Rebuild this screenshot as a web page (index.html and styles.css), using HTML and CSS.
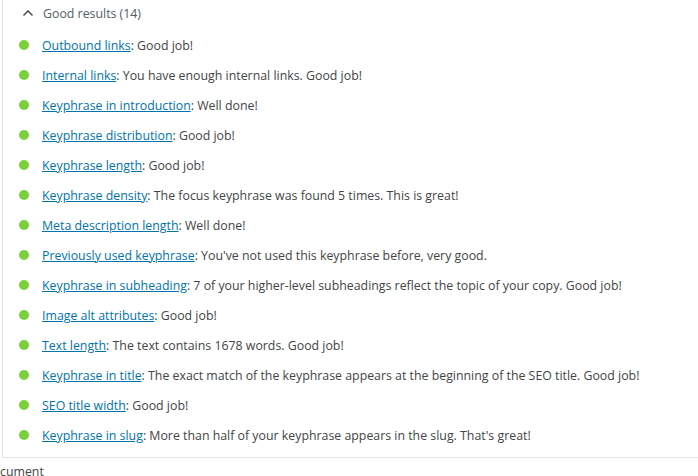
FILE: index.html
```html
<!DOCTYPE html>
<html>
<head>
<meta charset="utf-8">
<link rel="stylesheet" href="styles.css">
</head>
<body>
<div class="panel">
  <div class="header">
    <svg class="chev" width="12" height="8" viewBox="0 0 12 8"><path d="M1.5 6.5 L6 2 L10.5 6.5" fill="none" stroke="#50575e" stroke-width="1.6"/></svg>
    <span>Good results (14)</span>
  </div>
  <ul class="results">
    <li><span class="dot"></span><p><a href="#">Outbound links</a>: Good job!</p></li>
    <li><span class="dot"></span><p><a href="#">Internal links</a>: You have enough internal links. Good job!</p></li>
    <li><span class="dot"></span><p><a href="#">Keyphrase in introduction</a>: Well done!</p></li>
    <li><span class="dot"></span><p><a href="#">Keyphrase distribution</a>: Good job!</p></li>
    <li><span class="dot"></span><p><a href="#">Keyphrase length</a>: Good job!</p></li>
    <li><span class="dot"></span><p><a href="#">Keyphrase density</a>: The focus keyphrase was found 5 times. This is great!</p></li>
    <li><span class="dot"></span><p><a href="#">Meta description length</a>: Well done!</p></li>
    <li><span class="dot"></span><p><a href="#">Previously used keyphrase</a>: You've not used this keyphrase before, very good.</p></li>
    <li><span class="dot"></span><p><a href="#">Keyphrase in subheading</a>: 7 of your higher-level subheadings reflect the topic of your copy. Good job!</p></li>
    <li><span class="dot"></span><p><a href="#">Image alt attributes</a>: Good job!</p></li>
    <li><span class="dot"></span><p><a href="#">Text length</a>: The text contains 1678 words. Good job!</p></li>
    <li><span class="dot"></span><p><a href="#">Keyphrase in title</a>: The exact match of the keyphrase appears at the beginning of the SEO title. Good job!</p></li>
    <li><span class="dot"></span><p><a href="#">SEO title width</a>: Good job!</p></li>
    <li><span class="dot"></span><p><a href="#">Keyphrase in slug</a>: More than half of your keyphrase appears in the slug. That's great!</p></li>
  </ul>
</div>
<div class="footer">cument</div>
</body>
</html>
```
FILE: styles.css
```css
html, body { margin: 0; padding: 0; background: #fff; }
body {
  font-family: "Open Sans", "Noto Sans", sans-serif;
  font-size: 12.35px;
  color: #444;
  width: 698px;
  height: 476px;
  overflow: hidden;
}
.panel {
  margin-left: 2px;
  border-left: 1px solid #e2e4e7;
  border-bottom: 1px solid #e2e4e7;
  height: 458px;
  box-sizing: border-box;
}
.header {
  display: flex;
  align-items: center;
  height: 26px;
  padding-left: 19px;
  color: #555d66;
}
.chev { margin-right: 9px; margin-top: -1px; }
.results {
  list-style: none;
  margin: 0;
  padding: 4px 0 0 16px;
}
.results li {
  display: flex;
  align-items: center;
  height: 30px;
}
.dot {
  width: 10px;
  height: 10px;
  border-radius: 50%;
  background: #7ad03a;
  margin-right: 13px;
  flex: none;
}
.results p { margin: 0; white-space: nowrap; }
.results a { color: #0073aa; text-decoration: underline; }
.footer {
  padding-top: 7px;
  color: #444;
  line-height: 14px;
}
```
